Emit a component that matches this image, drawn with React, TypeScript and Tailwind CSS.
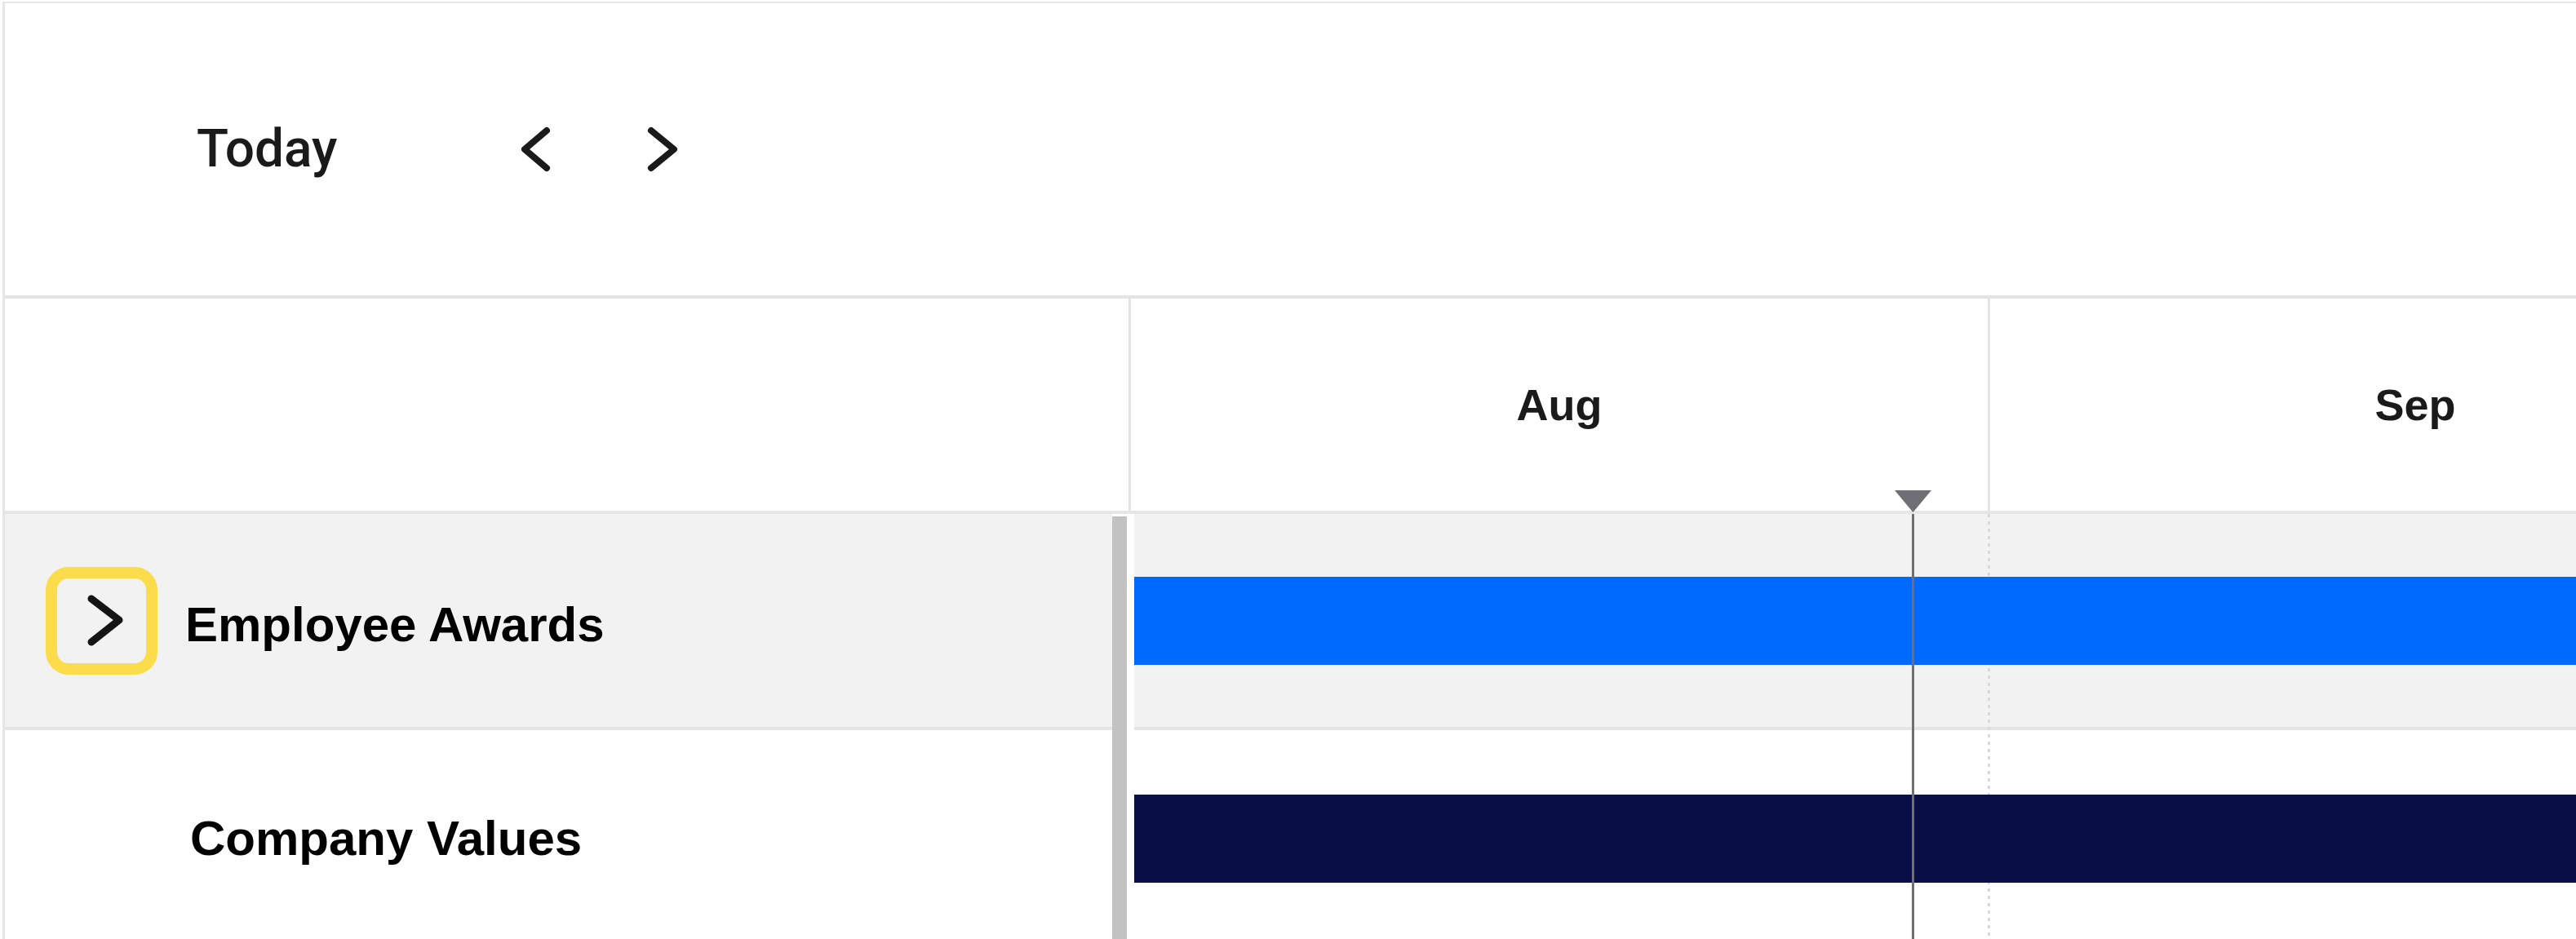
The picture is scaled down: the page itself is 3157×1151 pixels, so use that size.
import React from "react";

function ChevronLeftIcon() {
  return (
    <svg width="40" height="60" viewBox="0 0 40 60" fill="none" className="shrink-0">
      <polyline points="34,7 7,30 34,53" stroke="#1a1a1a" strokeWidth="8" strokeLinecap="round" strokeLinejoin="round" />
    </svg>
  );
}

function ChevronRightIcon() {
  return (
    <svg width="40" height="60" viewBox="0 0 40 60" fill="none" className="shrink-0">
      <polyline points="6,7 34,30 6,53" stroke="#1a1a1a" strokeWidth="8" strokeLinecap="round" strokeLinejoin="round" />
    </svg>
  );
}

export default function App() {
  return (
    <div className="w-[3157px] h-[1151px] overflow-hidden bg-white font-['Liberation_Sans',Arial,sans-serif]">
      <div className="mt-[2px] ml-[3px] h-[1149px] border-t-2 border-l-[3px] border-[#e6e6e6]">
        {/* Toolbar */}
        <div className="h-[362px] border-b-4 border-[#e4e4e4] flex items-center pl-[235px]">
          <span className="w-[395px] font-['Roboto',Arial,sans-serif] font-medium text-[64px] leading-none text-[#1a1a1a]">
            Today
          </span>
          <ChevronLeftIcon />
          <span className="ml-[116px] flex">
            <ChevronRightIcon />
          </span>
        </div>

        {/* Header row */}
        <div className="h-[264px] border-b-4 border-[#e6e6e6] flex">
          <div className="w-[1377px] shrink-0" />
          <div className="w-[1053px] shrink-0 border-l-[3px] border-[#e3e3e3] flex items-center justify-center">
            <span className="text-[54px] font-bold text-[#1a1a1a] leading-none">Aug</span>
          </div>
          <div className="w-[1045px] shrink-0 border-l-[3px] border-[#e3e3e3] flex items-center justify-center">
            <span className="text-[54px] font-bold text-[#1a1a1a] leading-none">Sep</span>
          </div>
        </div>

        {/* Body */}
        <div className="flex">
          {/* Left rows */}
          <div className="w-[1357px] shrink-0 flex flex-col">
            <div className="h-[265px] bg-[#f2f2f2] border-b-4 border-[#e4e4e4] flex items-center pl-[50px]">
              <button className="w-[137px] h-[132px] shrink-0 rounded-[28px] border-[14px] border-[#fbdc4b] bg-[#f2f2f2] flex items-center justify-center">
                <svg width="109" height="104" viewBox="0 0 109 104" fill="none">
                  <polyline points="42,25 76,51 42,78" stroke="#141414" strokeWidth="9" strokeLinecap="round" strokeLinejoin="round" />
                </svg>
              </button>
              <span className="ml-[34px] mt-[10px] text-[60px] font-bold text-black leading-none whitespace-nowrap">
                Employee Awards
              </span>
            </div>
            <div className="h-[265px] bg-white flex items-center pl-[227px]">
              <span className="text-[60px] font-bold text-black leading-none whitespace-nowrap">Company Values</span>
            </div>
          </div>

          {/* Scrollbar */}
          <div className="w-[18px] shrink-0 mt-[3px] h-[530px] bg-[#c2c2c2]" />
          <div className="w-[9px] shrink-0 bg-white" />

          {/* Chart */}
          <div className="relative flex-1 flex flex-col">
            <div className="h-[265px] bg-[#f2f2f2] border-b-4 border-[#e4e4e4] flex items-center">
              <div className="relative z-10 h-[108px] w-full bg-[#006aff]" />
            </div>
            <div className="h-[265px] bg-white flex items-center">
              <div className="relative z-10 h-[108px] w-full bg-[#0a0e47]" />
            </div>

            {/* month boundary dashed line */}
            <div className="absolute top-0 bottom-0 left-[1046px] w-[3px] bg-[repeating-linear-gradient(to_bottom,#d9d9d9_0px,#d9d9d9_4px,transparent_4px,transparent_9px)]" />

            {/* today marker */}
            <div className="absolute z-20 top-0 bottom-0 left-[953px] w-[3px] bg-[#6f6e74]" />
            <svg
              className="absolute z-20 top-[-29px] left-[932px]"
              width="45"
              height="27"
              viewBox="0 0 45 27"
            >
              <polygon points="0,0 45,0 22.5,27" fill="#6f6e74" />
            </svg>
          </div>
        </div>
      </div>
    </div>
  );
}
